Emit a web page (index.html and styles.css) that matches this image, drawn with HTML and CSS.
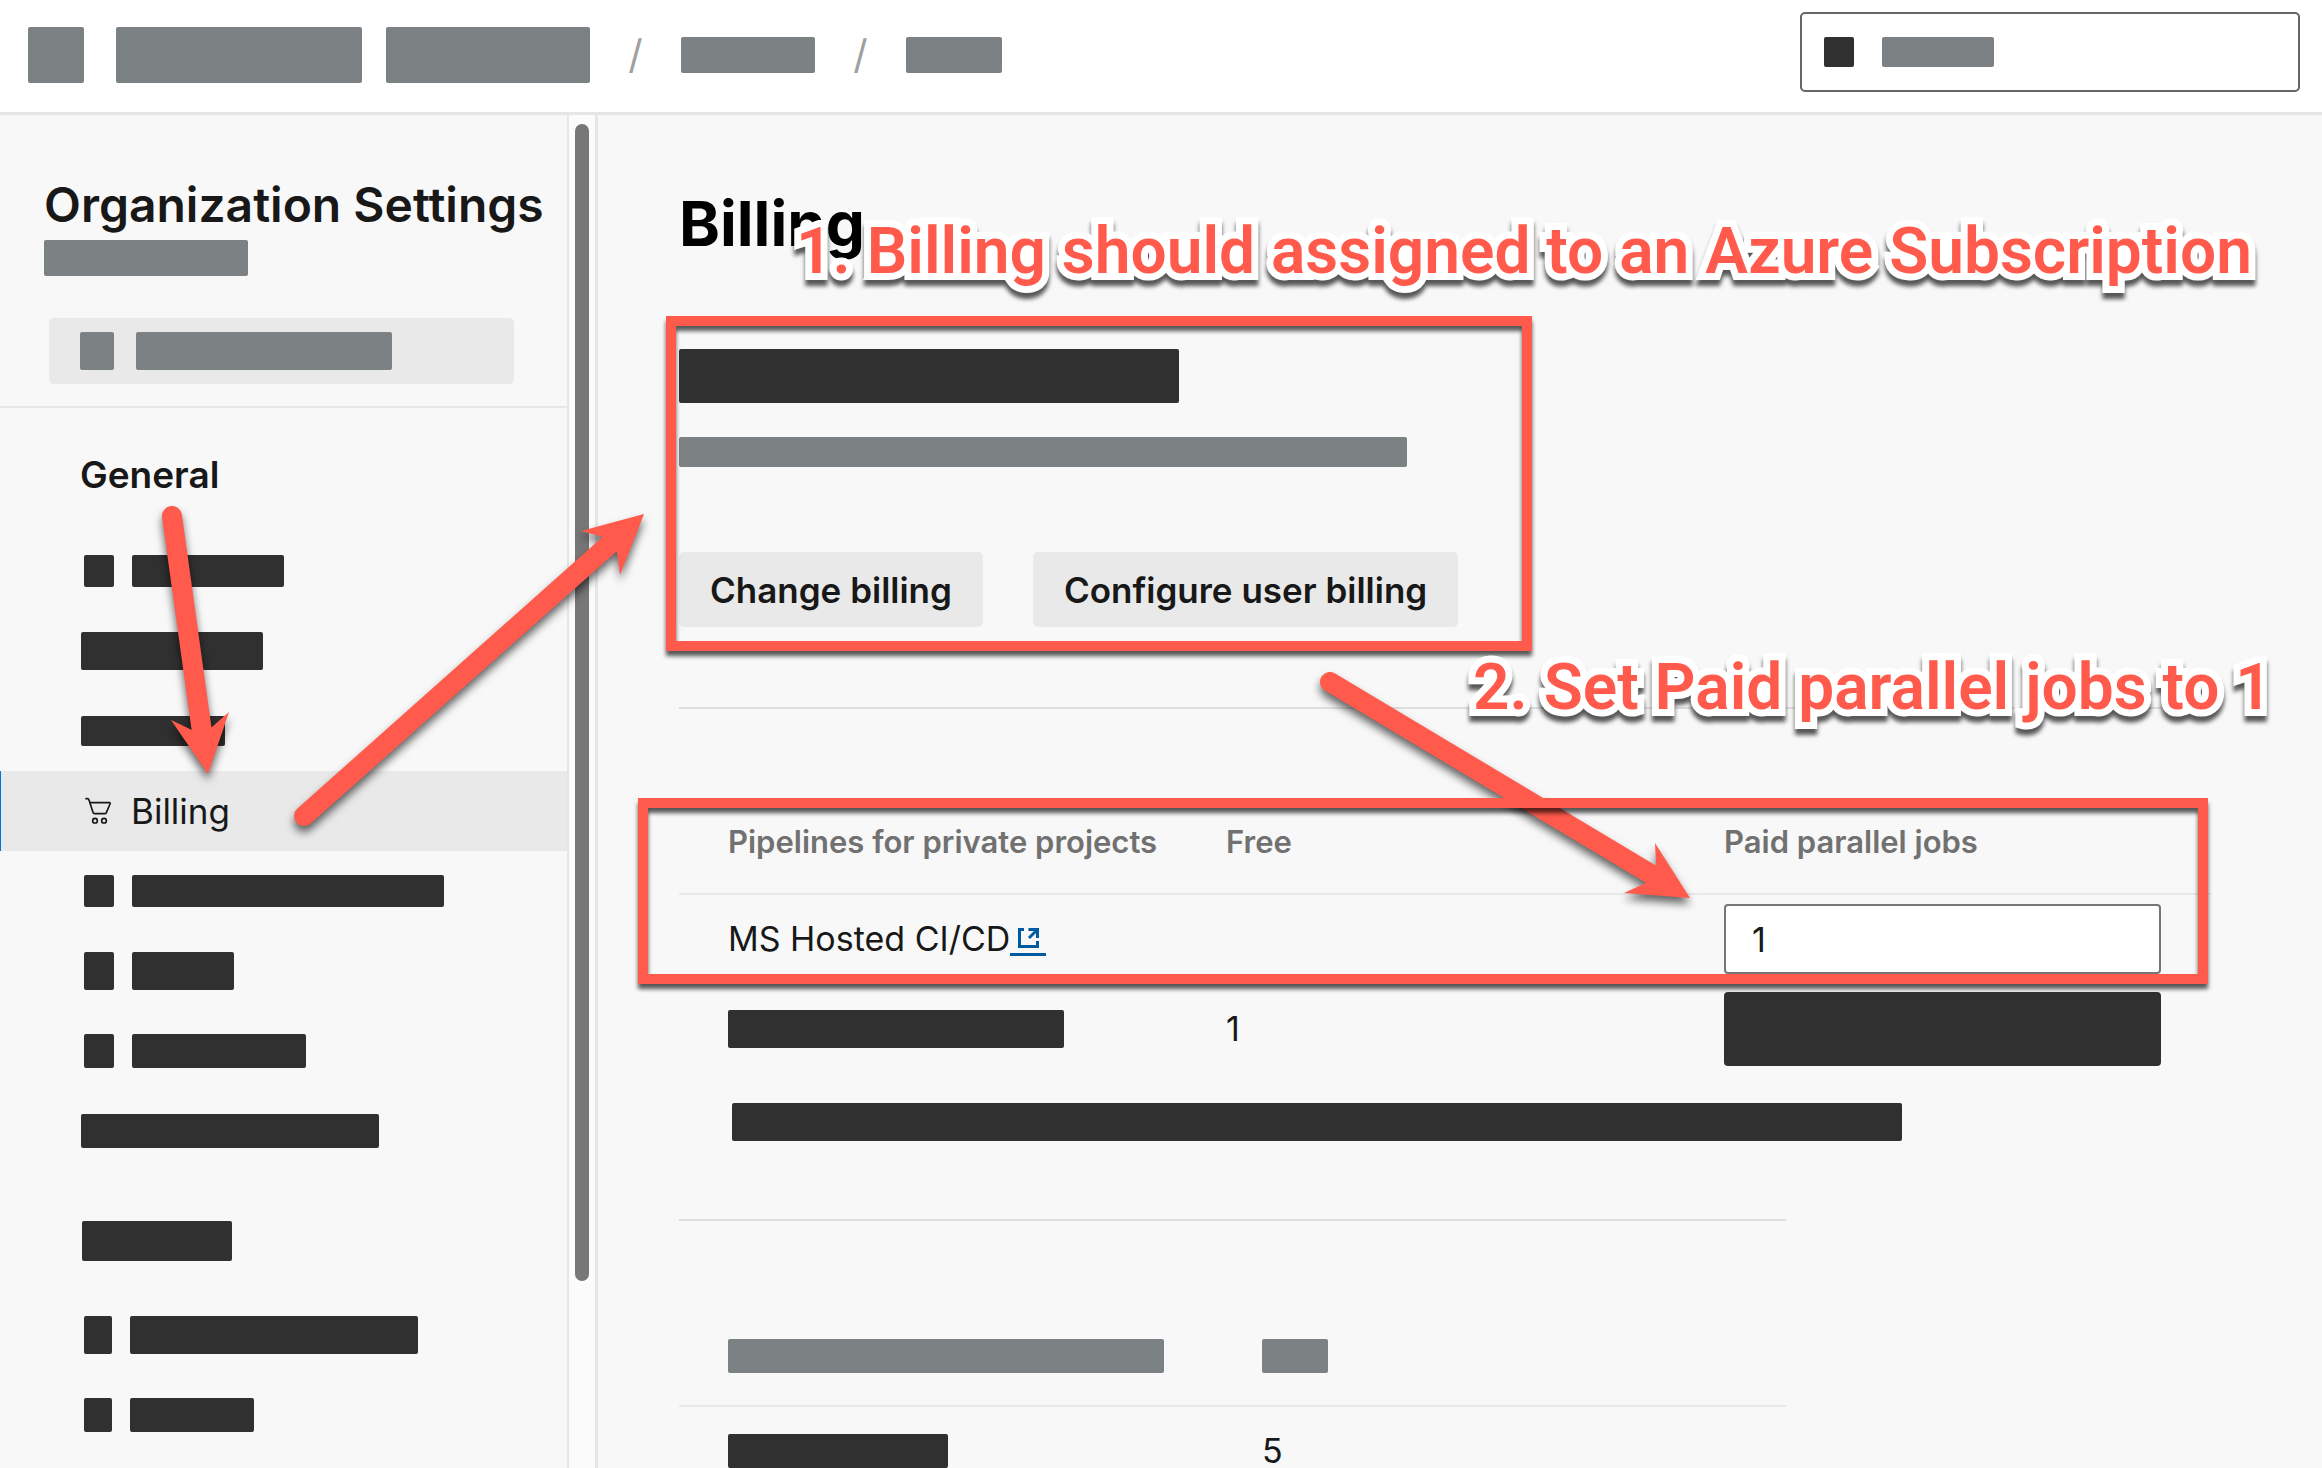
FILE: index.html
```html
<!DOCTYPE html>
<html lang="en">
<head>
<meta charset="utf-8">
<meta name="viewport" content="width=device-width, initial-scale=1">
<title>Billing - Organization Settings</title>
<link rel="stylesheet" href="styles.css">
</head>
<body>
<div class="app">
  <header class="topbar">
    <span class="mask mask-grey" style="width:56px;height:56px"></span>
    <span class="mask mask-grey brand" style="width:246px;height:56px"></span>
    <span class="mask mask-grey org" style="width:204px;height:56px"></span>
    <span class="slash">/</span>
    <span class="mask mask-grey" style="width:134px;height:36px"></span>
    <span class="slash">/</span>
    <span class="mask mask-grey" style="width:96px;height:36px"></span>
    <div class="topsearch">
      <span class="mask" style="width:30px;height:30px"></span>
      <span class="mask mask-grey" style="width:112px;height:30px"></span>
    </div>
  </header>

  <div class="body">
    <aside class="sidebar">
      <div class="sidebar-content">
        <div class="sidebar-head">
          <h2 class="sidebar-title">Organization Settings</h2>
          <span class="mask mask-grey" style="width:204px;height:36px"></span>
          <div class="filter">
            <span class="mask mask-grey" style="width:34px;height:38px"></span>
            <span class="mask mask-grey" style="width:256px;height:38px"></span>
          </div>
        </div>
        <nav class="nav" aria-label="Organization settings">
          <h3 class="nav-heading">General</h3>
          <div class="nav-item"><span class="mask" style="width:30px;height:32px"></span><span class="mask" style="width:152px;height:32px"></span></div>
          <div class="nav-item nav-plain"><span class="mask" style="width:182px;height:38px"></span></div>
          <div class="nav-item nav-plain"><span class="mask" style="width:144px;height:30px"></span></div>
          <a class="nav-item nav-current" href="#billing" aria-current="page">
            <svg class="cart" viewBox="72 80 90 90" aria-hidden="true">
              <path d="M78 88h4q4 0 5 4l12 37q1 4 5 4h30q4 0 5-3l11-26q2-4-2-4H90"/>
              <circle cx="105" cy="154" r="7"/>
              <circle cx="132" cy="154" r="7"/>
            </svg>
            <span>Billing</span>
          </a>
          <div class="nav-item"><span class="mask" style="width:30px;height:32px"></span><span class="mask" style="width:312px;height:32px"></span></div>
          <div class="nav-item"><span class="mask" style="width:30px;height:38px"></span><span class="mask" style="width:102px;height:38px"></span></div>
          <div class="nav-item"><span class="mask" style="width:30px;height:34px"></span><span class="mask" style="width:174px;height:34px"></span></div>
          <div class="nav-item nav-plain"><span class="mask" style="width:298px;height:34px"></span></div>
          <div class="nav-group"><span class="mask" style="width:150px;height:40px"></span></div>
          <div class="nav-item"><span class="mask" style="width:28px;height:38px"></span><span class="mask" style="width:288px;height:38px"></span></div>
          <div class="nav-item"><span class="mask" style="width:28px;height:34px"></span><span class="mask" style="width:124px;height:34px"></span></div>
        </nav>
      </div>
      <div class="track"><div class="thumb" style="height:1157px"></div></div>
    </aside>

    <main class="main" id="billing">
      <h1 class="page-title">Billing</h1>
      <section class="setup">
        <span class="mask" style="width:500px;height:54px"></span>
        <span class="mask mask-grey" style="width:728px;height:30px"></span>
        <div class="actions">
          <button class="button" type="button">Change billing</button>
          <button class="button" type="button">Configure user billing</button>
        </div>
        <div class="highlight highlight-setup"></div>
      </section>

      <section class="pipelines">
        <table class="grid">
          <colgroup><col class="col-name"><col class="col-free"><col></colgroup>
          <thead>
            <tr><th scope="col">Pipelines for private projects</th><th scope="col">Free</th><th scope="col"><label for="jobs">Paid parallel jobs</label></th></tr>
          </thead>
          <tbody>
            <tr>
              <td>MS Hosted CI/CD<a class="external" href="#hosted" aria-label="Learn more"><svg viewBox="0 0 36 28" aria-hidden="true"><path d="M14 4.500H9.500V21.500H27.500V16M18.500 4.500H27.500V13M27 5L19 13"/></svg></a></td>
              <td></td>
              <td><input class="jobs" id="jobs" type="text" value="1"></td>
            </tr>
            <tr>
              <td><span class="mask" style="width:336px;height:38px"></span></td>
              <td>1</td>
              <td><span class="mask mask-field"></span></td>
            </tr>
          </tbody>
        </table>
        <span class="mask note" style="width:1170px;height:38px"></span>
      </section>

      <section class="usage">
        <table class="grid">
          <colgroup><col class="col-wide"><col></colgroup>
          <thead>
            <tr><th scope="col"><span class="mask mask-grey" style="width:436px;height:34px"></span></th><th scope="col"><span class="mask mask-grey" style="width:66px;height:34px"></span></th></tr>
          </thead>
          <tbody>
            <tr><td><span class="mask" style="width:220px;height:34px"></span></td><td>5</td></tr>
          </tbody>
        </table>
      </section>
    </main>
  </div>

  <svg class="arrows" aria-hidden="true">
    <g>
      <path class="shaft" d="M172 516L202 732"/>
      <path d="M208 774L171 720L192 730L212 727L229 712Z"/>
    </g>
    <g>
      <path class="shaft" d="M304 816L612 542"/>
      <path d="M644 514L581 531L603 537L617 552L620 575Z"/>
    </g>
    <g>
      <path class="shaft" d="M1330 682L1654 876"/>
      <path d="M1690 898L1655 843L1656 865L1646 883L1624 893Z"/>
    </g>
  </svg>
  <div class="highlight highlight-jobs"></div>
  <p class="callout callout-one">1. Billing should assigned to an Azure Subscription</p>
  <p class="callout callout-two">2. Set Paid parallel jobs to 1</p>
</div>
</body>
</html>
```
FILE: styles.css
```css
* { box-sizing: border-box; }

body {
  margin: 0;
  background: #f8f8f8;
  color: #181818;
  font-family: Inter, "Liberation Sans", sans-serif;
  font-size: 35px;
  line-height: 42px;
}

h1, h2, h3, p { margin: 0; }

.app {
  position: relative;
  display: flex;
  flex-direction: column;
  height: 100vh;
  overflow: hidden;
}

/* Redacted content */
.mask {
  display: block;
  flex: none;
  border-radius: 2px;
  background: #303030;
}
.mask-grey { background: #7c8184; }

/* Top bar */
.topbar {
  display: flex;
  flex: none;
  align-items: center;
  height: 115px;
  padding: 0 22px 2px 28px;
  border-bottom: 3px solid #e6e6e6;
  background: #fff;
}
.brand { margin-left: 32px; }
.org { margin-left: 24px; }
.slash {
  width: 91px;
  color: #a0a0a0;
  font-size: 40px;
  text-align: center;
}
.topsearch {
  display: flex;
  align-items: center;
  align-self: flex-start;
  gap: 28px;
  width: 500px;
  height: 80px;
  margin-top: 12px;
  margin-left: auto;
  padding: 0 22px;
  border: 2px solid #666;
  border-radius: 5px;
}

.body {
  display: flex;
  flex: 1;
  min-height: 0;
}

/* Sidebar */
.sidebar {
  display: flex;
  flex: none;
  width: 598px;
  border-right: 3px solid #e6e6e6;
}
.sidebar-content {
  flex: 1;
  overflow: hidden;
}
.track {
  width: 28px;
  padding: 9px 6px 0;
  border-left: 2px solid #e6e6e6;
  background: #fbfbfb;
}
.thumb {
  border-radius: 7px;
  background: #777;
}
.sidebar-head {
  padding: 61px 0 22px 44px;
  border-bottom: 2px solid #e6e6e6;
}
.sidebar-title {
  margin-bottom: 6px;
  font-size: 48px;
  font-weight: 600;
  line-height: 58px;
  white-space: nowrap;
}
.filter {
  display: flex;
  align-items: center;
  gap: 22px;
  height: 66px;
  margin: 42px 53px 0 5px;
  padding: 0 31px;
  border-radius: 5px;
  background: #e9e9e9;
}
.nav-heading {
  padding: 45px 0 34px 80px;
  font-size: 37px;
  font-weight: 600;
  line-height: 44px;
}
.nav-item {
  display: flex;
  align-items: center;
  gap: 18px;
  height: 80px;
  padding-left: 84px;
}
.nav-plain { padding-left: 81px; }
.nav-group { padding: 50px 0 34px 82px; }
.nav-current {
  gap: 17px;
  background: #e9e9e9;
  box-shadow: inset 1px 0 #0078d4;
  color: inherit;
  text-decoration: none;
}
.cart {
  width: 30px;
  height: 30px;
  fill: none;
  stroke: #181818;
  stroke-width: 5;
  stroke-linecap: round;
}

/* Main column */
.main {
  flex: 1;
  min-width: 0;
  padding: 71px 111px 0 81px;
  overflow: hidden;
}
.page-title {
  color: #000;
  font-size: 62px;
  font-weight: 700;
  line-height: 76px;
}
.setup {
  display: flex;
  position: relative;
  flex-direction: column;
  gap: 34px;
  margin: 87px 0 80px;
}
.actions {
  display: flex;
  gap: 50px;
  margin-top: 51px;
}
.button {
  height: 75px;
  padding: 0 31px;
  border: 0;
  border-radius: 5px;
  background: #e9e9e9;
  color: inherit;
  font: inherit;
  font-weight: 600;
}

.pipelines { border-top: 2px solid #dedede; }
.grid {
  width: 100%;
  border-collapse: separate;
  border-spacing: 0;
  font-size: 34px;
  table-layout: fixed;
}
.col-name { width: 547px; }
.col-free { width: 498px; }
.col-wide { width: 583px; }
.grid th {
  padding: 114px 0 32px;
  border-bottom: 2px solid #e9e9e9;
  color: #717171;
  font-size: 31px;
  font-weight: 600;
  line-height: 38px;
  text-align: left;
}
.grid td {
  padding: 9px 0;
  line-height: 34px;
}
.grid th:first-child,
.grid td:first-child { padding-left: 49px; }
.external {
  display: inline-block;
  width: 36px;
  border-bottom: 3px solid #005ba1;
  vertical-align: -5px;
}
.external svg {
  display: block;
  width: 36px;
  height: 28px;
  fill: none;
  stroke: #005ba1;
  stroke-width: 3;
}
.jobs {
  display: block;
  width: 437px;
  height: 70px;
  padding: 0 26px;
  border: 2px solid #767676;
  border-radius: 4px;
  background: #fff;
  color: inherit;
  font: inherit;
}
.mask-field {
  width: 437px;
  height: 74px;
  border-radius: 4px;
}
.note { margin: 28px 0 78px 53px; }

.usage {
  max-width: 1107px;
  border-top: 2px solid #dedede;
}
.usage th { padding: 118px 0 32px; }
.usage td { padding: 27px 0; }

/* Annotations drawn over the page */
.highlight {
  position: absolute;
  border: 10px solid #ff5a4c;
  filter: drop-shadow(0 5px 2px rgba(0, 0, 0, .65));
  pointer-events: none;
}
.highlight-setup {
  top: -33px;
  bottom: -24px;
  left: -13px;
  width: 866px;
}
.highlight-jobs {
  top: 798px;
  right: 114px;
  left: 638px;
  height: 186px;
}
.arrows {
  position: absolute;
  top: 0;
  left: 0;
  width: 100%;
  height: 100%;
  fill: #ff5a4c;
  pointer-events: none;
}
.arrows g { filter: drop-shadow(0 6px 4px rgba(0, 0, 0, .6)); }
.shaft {
  fill: none;
  stroke: #ff5a4c;
  stroke-width: 20;
  stroke-linecap: round;
}
.callout {
  position: absolute;
  color: #ff5a4c;
  font-family: Roboto, "Liberation Sans", sans-serif;
  font-size: 64px;
  font-weight: 600;
  line-height: 76px;
  white-space: nowrap;
  paint-order: stroke fill;
  -webkit-text-stroke: 14px #fff;
  stroke-linejoin: round;
  filter: drop-shadow(0 6px 2px rgba(0, 0, 0, .65));
}
.callout-one {
  top: 214px;
  left: 796px;
}
.callout-two {
  top: 650px;
  left: 1473px;
}
```
